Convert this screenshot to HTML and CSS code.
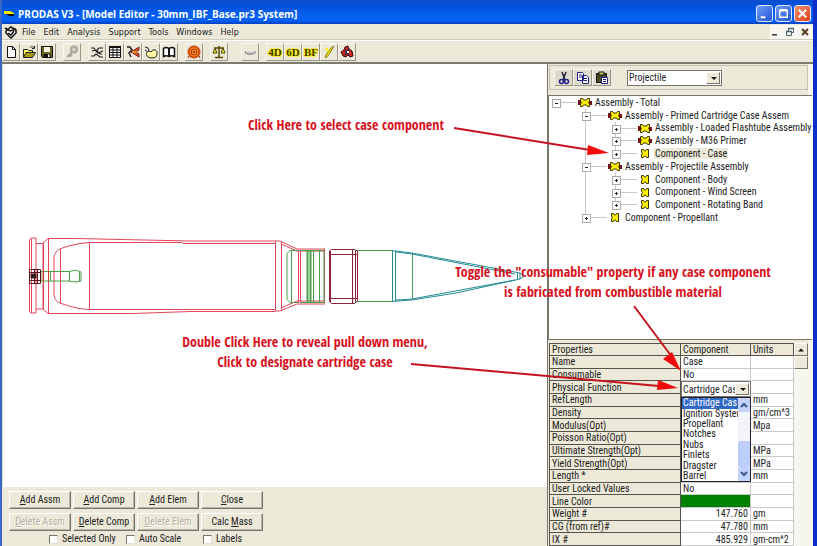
FILE: index.html
```html
<!DOCTYPE html>
<html lang="en">
<head>
<meta charset="utf-8">
<title>PRODAS V3 - [Model Editor - 30mm_IBF_Base.pr3 System]</title>
<link rel="stylesheet" href="styles.css">
</head>
<body>
<svg class="defs" aria-hidden="true">
  <symbol id="assembly" viewBox="0 0 16 11">
    <path d="M1 3h3v5H1z" fill="#7a1010"/><path d="M12 4h3v4h-3z" fill="#7a1010"/>
    <path d="M3.500 1.500h2l1 1.500h3l1-1.500h2v2.500l-1 1.500 1 1.500v2.500h-2L9.500 8h-3l-1 1.500h-2V7l1-1.500-1-1.500z" fill="#ffef00" stroke="#3a3200"/>
  </symbol>
  <symbol id="component" viewBox="0 0 16 11">
    <path d="M4.500 1.500h2l1 1.500h1l1-1.500h2v8h-2L8.500 8h-1l-1 1.500h-2V7l1-1.500-1-1.500z" fill="#ffef00" stroke="#3a3200"/>
  </symbol>
</svg>

<div class="window">
  <header class="titlebar">
    <svg class="app-icon" viewBox="0 0 12 8"><path d="M1 1h6l4 2v1H1z" fill="#f6e600"/><path d="M3 4h8v2H6z" fill="#101010"/></svg>
    <h1>PRODAS V3 - [Model Editor - 30mm_IBF_Base.pr3 System]</h1>
    <div class="window-buttons">
      <button aria-label="Minimize"><svg viewBox="0 0 16 16"><path d="M4 11h5v2H4z" fill="#fff"/></svg></button>
      <button aria-label="Maximize"><svg viewBox="0 0 16 16"><path d="M4 5h8v7H4zM4 4h8" fill="none" stroke="#fff" stroke-width="1.500"/></svg></button>
      <button class="close" aria-label="Close window"><svg viewBox="0 0 16 16"><path d="M4 4l8 8M12 4l-8 8" stroke="#fff" stroke-width="2"/></svg></button>
    </div>
  </header>

  <nav class="menubar">
    <svg class="menu-icon" viewBox="0 0 14 14"><path d="M2 6l5-4 5 3v3l-5 5-5-5z" fill="#fff" stroke="#111" stroke-width="1.500"/><path d="M1 3l5 3 6-2M4 8l3 2 3-4" fill="none" stroke="#111" stroke-width="1.500"/></svg>
    <a href="#">File</a><a href="#">Edit</a><a href="#">Analysis</a><a href="#">Support</a><a href="#">Tools</a><a href="#">Windows</a><a href="#">Help</a>
    <div class="mdi-buttons">
      <button aria-label="Minimize document"><svg viewBox="0 0 10 10"><path d="M2 7h5v1.500H2z" fill="#333"/></svg></button>
      <button aria-label="Restore document"><svg viewBox="0 0 10 10"><path d="M3.500 4V1.500h5v4H7M1.500 4.500h5v4h-5z" fill="none" stroke="#4d6670"/><path d="M3 1.500h6M1 4.500h6" stroke="#4d6670" stroke-width="1.500"/></svg></button>
      <button aria-label="Close document"><svg viewBox="0 0 10 10"><path d="M2 2l6 6M8 2L2 8" stroke="#5a3a20" stroke-width="2"/></svg></button>
    </div>
  </nav>

  <div class="toolbar" role="toolbar">
    <div class="group">
      <button aria-label="New"><svg viewBox="0 0 14 14"><path d="M3.500 1.500h5l3 3v8h-8z" fill="#fff" stroke="#111"/><path d="M8.500 1.500v3h3" fill="none" stroke="#111"/></svg></button>
      <button aria-label="Open"><svg viewBox="0 0 14 14"><path d="M1.500 12V4.500h4l1 1h4V7" fill="#ffef60" stroke="#222"/><path d="M1.500 12.500L4 7.500h9.500l-3 5z" fill="#a59a10" stroke="#222"/><path d="M8 3c1-2 3-2 4 0M12.500 1v2.500H10" fill="none" stroke="#222"/></svg></button>
      <button aria-label="Save"><svg viewBox="0 0 14 14"><path d="M1.500 1.500h11v11h-10l-1-1z" fill="#6d6a20" stroke="#111"/><path d="M4 2h6v5H4z" fill="#f4f2e4"/><path d="M3.500 9h7v3.500h-7z" fill="#111"/><path d="M8 9.500h1.500V12H8z" fill="#fff"/></svg></button>
    </div>
    <div class="group">
      <button aria-label="Find"><svg viewBox="0 0 14 14"><circle cx="9" cy="4.500" r="3" fill="#d5d2c5" stroke="#aaa79b" stroke-width="2"/><path d="M7 7l-5 5M5 12l2-3" stroke="#aaa79b" stroke-width="2"/></svg></button>
    </div>
    <div class="group">
      <button aria-label="Model"><svg viewBox="0 0 14 14"><path d="M1 3l3 0 2 3 3-3h4M2 6l3-1 3 3 5-2M1 11h3l2-2 4 3h3M7 6l3 3 2 0" fill="none" stroke="#222" stroke-width="1.200"/></svg></button>
      <button aria-label="Table"><svg viewBox="0 0 14 14"><path d="M1.500 2.500h11v10h-11zM1.500 5h11M1.500 7.500h11M1.500 10h11M5 2v10.500M9 2v10.500" fill="#fff" stroke="#111"/><path d="M1 2h12" stroke="#111" stroke-width="2"/></svg></button>
      <button aria-label="Launch"><svg viewBox="0 0 14 14"><path d="M1 2h3l2 3-3 3 2 4" fill="none" stroke="#222" stroke-width="1.500"/><path d="M5 7l8-5v3l-3 2 3 2v3z" fill="#e4521b" stroke="#722"/><path d="M6 7h5" stroke="#ffd040"/></svg></button>
      <button aria-label="Shape"><svg viewBox="0 0 14 14"><path d="M1 2l3 1 1 3M1 5l3 2" fill="none" stroke="#222"/><path d="M3 11c-2-4 2-6 4-4 2-4 7-2 6 2 0 3-2 4-5 4-3 0-4-1-5-2z" fill="#fff5a0" stroke="#222"/></svg></button>
      <button aria-label="Library"><svg viewBox="0 0 14 14"><path d="M1.500 3.500c2-2 4-1 5.500 0 1.500-1 3.500-2 5.500 0v8c-2-1-4-1-5.500 0-1.500-1-3.500-1-5.500 0z" fill="#fff" stroke="#111" stroke-width="1.500"/><path d="M7 3v9" stroke="#111" stroke-width="2"/></svg></button>
    </div>
    <div class="group">
      <button aria-label="Target"><svg viewBox="0 0 14 14"><circle cx="7" cy="7" r="5.500" fill="#f39222" stroke="#d04a10" stroke-width="2"/><circle cx="7" cy="7" r="3" fill="none" stroke="#b02a10"/><circle cx="7" cy="7" r="1" fill="#801808"/><path d="M2 11l-1 2M12 11l1 2" stroke="#801808"/></svg></button>
    </div>
    <div class="group">
      <button aria-label="Balance"><svg viewBox="0 0 14 14"><path d="M2 3h10M7 1v11M3 12.500h8" stroke="#554b00" stroke-width="1.500"/><path d="M3 3L1 8h4zM11 3L9 8h4z" fill="#f1e33a" stroke="#554b00"/></svg></button>
    </div>
    <div class="group spaced">
      <button aria-label="Shell"><svg viewBox="0 0 14 14"><path d="M2 7c1 3 9 3 11 0z" fill="#b7b7b7" stroke="#777"/><path d="M3 7h9" stroke="#fff"/></svg></button>
    </div>
    <div class="group dof">
      <button>4D</button>
      <button>6D</button>
      <button>BF</button>
      <button aria-label="Flash"><svg viewBox="0 0 14 14"><path d="M12 1L9 3 6 7l-3 5 1 1 4-5 1-2z" fill="#ffef00" stroke="#6a6200" stroke-width=".8"/><path d="M4 3l2 3" stroke="#ffef00" stroke-width="2"/></svg></button>
      <button aria-label="Fragment"><svg viewBox="0 0 14 14"><path d="M1 7l3-2 1-3 3-1 1 3 3 2 1 5-3 1-2-2-2 2-3-1z" fill="#c52a1c" stroke="#401010"/><path d="M5 5l4 5M9 4l-4 6" stroke="#2c2c60" stroke-width="1.500"/><path d="M7 6h2v2H7z" fill="#fff"/></svg></button>
    </div>
  </div>

  <div class="workspace">
    <main class="editor">
      <div class="canvas">
        <svg class="model" viewBox="3 64 544 423" fill="none" role="img" aria-label="Cartridge cross section">
          <g stroke="#e0455a">
            <path d="M29.500 239.500l2-1.500h4.500v75h-4.500l-2-1.500zM31.500 239v74"/>
            <path d="M36 243.500h7v65.500h-7M43.500 243v66M43 243l5-4.500h28l114 2.500h85M43 309l5 4.500h85l58-2h84M48.500 239v74"/>
            <path d="M90 242.500c-14 1-24 4-30 6.500-4 2-6 6-6 9v36c0 4 2 8 6 9 8 3 18 6 30 6.500M60.500 249v54M89.500 242v67M90 242.500h92l1 1h92M90 309.500h185M275.500 241v70M281.500 242v68"/>
            <path d="M275 241h5l17 8h28M275 311h5l17-7h28M281 244l16 7h28M281 308l16-7h28M298.500 250v53M300.500 250v53M324.500 249v54"/>
          </g>
          <g stroke="#4aa04a">
            <path d="M298 250.500h-8l-3 3v46l3 3h8M291.500 251v51M300 250.500h24v52h-24M313.500 251v51M319.500 251v51"/>
            <path d="M307.500 251v51M310.500 251v51" stroke-width="2"/>
            <path d="M357 250.500h35M357 301.500h35M412.500 253v46"/>
            <path d="M41 271.500h28l7-1.500 5 2v9l-5 1-7-1H41zM50.500 271v10M69.500 271v10M79.500 271v10"/>
          </g>
          <g stroke="#8c2234">
            <path d="M329.500 251l2-1.500h23l3 1.500v50l-3 2.500h-23l-2-2zM330.500 251v51M352.500 250v53M355.500 250v53M330 254.500h27M330 298.500h27"/>
          </g>
          <g stroke="#258b94">
            <path d="M392.500 250v52M395.500 251v50M392 250.500l20 2.500 108 20M396 252l16 2 103 20M392 301.500l20-1.500 44-7 64-14M396 300l16-1 103-19M517.500 273v6M520 273l3 2v2l-3 2z"/>
          </g>
          <g stroke="#5b1620">
            <path d="M29.500 269.500h11v14h-11zM29 272.500h11M29 280.500h11M34.500 270v13M37.500 270v13" />
            <path d="M31 274h5v4h-5z" fill="#222"/><path d="M43.500 271v10M48.500 271v10" stroke="#d03a20"/>
          </g>
        </svg>
      </div>
      <div class="actions">
        <div class="button-grid">
          <button><u>A</u>dd Assm</button><button><u>A</u>dd Comp</button><button><u>A</u>dd Elem</button><button><u>C</u>lose</button>
          <button disabled><u>D</u>elete Assm</button><button><u>D</u>elete Comp</button><button disabled><u>D</u>elete Elem</button><button>Calc <u>M</u>ass</button>
        </div>
        <div class="options">
          <label><input type="checkbox">Selected Only</label>
          <label><input type="checkbox">Auto Scale</label>
          <label><input type="checkbox">Labels</label>
        </div>
      </div>
    </main>

    <aside class="side">
      <div class="edit-tools">
        <div class="clipboard">
          <button aria-label="Cut"><svg viewBox="0 0 14 14"><path d="M5 1l3 8M9 1L6 9" stroke="#223" stroke-width="1.500"/><circle cx="4.500" cy="10.500" r="2" fill="none" stroke="#228" stroke-width="1.500"/><circle cx="9.500" cy="10.500" r="2" fill="none" stroke="#228" stroke-width="1.500"/></svg></button>
          <button aria-label="Copy"><svg viewBox="0 0 14 14"><path d="M1.500 1.500h5l1 1v7h-6zM6.500 4.500h4l2 2v6h-6z" fill="#fff" stroke="#228"/><path d="M3 4h3M3 6h3M8 7.500h3M8 9.500h3" stroke="#228"/></svg></button>
          <button aria-label="Paste"><svg viewBox="0 0 14 14"><path d="M1.500 2.500h10v9h-10z" fill="#4d4a20" stroke="#111"/><path d="M4 1h5v3H4z" fill="#cc6" stroke="#111"/><path d="M6.500 6.500h6v6h-6z" fill="#fff" stroke="#228"/><path d="M8 8.500h3M8 10.500h3" stroke="#228"/></svg></button>
        </div>
        <div class="combo view-combo"><select aria-label="View"><option>Projectile</option></select></div>
      </div>

      <div class="tree-box">
        <ul class="tree" role="tree">
          <li><i class="box minus first"></i><svg><use href="#assembly"/></svg><span>Assembly - Total</span></li>
          <li><i class="guide none"></i><i class="box minus"></i><svg><use href="#assembly"/></svg><span>Assembly - Primed Cartridge Case Assem</span></li>
          <li><i class="guide none"></i><i class="guide"></i><i class="box plus"></i><svg><use href="#assembly"/></svg><span>Assembly - Loaded Flashtube Assembly</span></li>
          <li><i class="guide none"></i><i class="guide"></i><i class="box plus"></i><svg><use href="#assembly"/></svg><span>Assembly - M36 Primer</span></li>
          <li><i class="guide none"></i><i class="guide"></i><i class="box plus last"></i><svg><use href="#component"/></svg><span class="selected">Component - Case</span></li>
          <li><i class="guide none"></i><i class="box minus"></i><svg><use href="#assembly"/></svg><span>Assembly - Projectile Assembly</span></li>
          <li><i class="guide none"></i><i class="guide"></i><i class="box plus"></i><svg><use href="#component"/></svg><span>Component - Body</span></li>
          <li><i class="guide none"></i><i class="guide"></i><i class="box plus"></i><svg><use href="#component"/></svg><span>Component - Wind Screen</span></li>
          <li><i class="guide none"></i><i class="guide"></i><i class="box plus last"></i><svg><use href="#component"/></svg><span>Component - Rotating Band</span></li>
          <li><i class="guide none"></i><i class="box plus last"></i><svg><use href="#component"/></svg><span>Component - Propellant</span></li>
        </ul>
      </div>

      <div class="properties">
        <table>
          <colgroup><col class="name"><col class="value"><col class="unit"></colgroup>
          <thead><tr><th>Properties</th><th>Component</th><th>Units</th></tr></thead>
          <tbody>
            <tr><th>Name</th><td>Case</td><td></td></tr>
            <tr><th>Consumable</th><td>No</td><td></td></tr>
            <tr><th>Physical Function</th><td class="editing">
              <div class="popup">
                <div class="combo"><select aria-label="Physical Function"><option>Cartridge Cas</option></select></div>
                <div class="dropdown">
                  <ul role="listbox" aria-label="Physical Function choices">
                    <li role="option" aria-selected="true">Cartridge Cas</li><li role="option">Ignition Syster</li><li role="option">Propellant</li><li role="option">Notches</li><li role="option">Nubs</li><li role="option">Finlets</li><li role="option">Dragster</li><li role="option">Barrel</li>
                  </ul>
                  <div class="xp-scroll">
                    <svg viewBox="0 0 12 12"><path d="M3 8l3-3 3 3" fill="none" stroke="#3d568c" stroke-width="2"/></svg>
                    <i></i>
                    <svg viewBox="0 0 12 12"><path d="M3 4l3 3 3-3" fill="none" stroke="#3d568c" stroke-width="2"/></svg>
                  </div>
                </div>
              </div></td><td></td></tr>
            <tr><th>RefLength</th><td></td><td>mm</td></tr>
            <tr><th>Density</th><td></td><td>gm/cm^3</td></tr>
            <tr><th>Modulus(Opt)</th><td></td><td>Mpa</td></tr>
            <tr><th>Poisson Ratio(Opt)</th><td></td><td></td></tr>
            <tr><th>Ultimate Strength(Opt)</th><td></td><td>MPa</td></tr>
            <tr><th>Yield Strength(Opt)</th><td></td><td>MPa</td></tr>
            <tr><th>Length *</th><td></td><td>mm</td></tr>
            <tr><th>User Locked Values</th><td>No</td><td></td></tr>
            <tr><th>Line Color</th><td class="swatch"></td><td></td></tr>
            <tr><th>Weight #</th><td class="num">147.760</td><td>gm</td></tr>
            <tr><th>CG (from ref)#</th><td class="num">47.780</td><td>mm</td></tr>
            <tr><th>IX #</th><td class="num">485.929</td><td>gm-cm^2</td></tr>
          </tbody>
        </table>
        <div class="scrollbar"><button aria-label="Scroll up"><svg viewBox="0 0 12 12"><path d="M3 7.500h6L6 4.500z" fill="#111"/></svg></button><i></i></div>
      </div>
    </aside>
  </div>

  <div class="notes">
    <svg viewBox="0 0 817 546" width="817" height="546" aria-hidden="true">
      <g stroke="#c41420" stroke-width="2"><path d="M454 128l136 22M411 364l248 22M634 306l38 51"/></g>
      <g fill="#f00a0a"><path d="M609 153l-21-8-1 10zM678 388l-20-8-1 10zM681 371l-18-12 9-7z"/></g>
    </svg>
    <p class="note select-case">Click Here to select case component</p>
    <p class="note reveal-menu">Double Click Here to reveal pull down menu,<br>Click to designate cartridge case</p>
    <p class="note consumable">Toggle the "consumable" property if any case component<br>is fabricated from combustible material</p>
  </div>
</div>
</body>
</html>
```
FILE: styles.css
```css
* { box-sizing: border-box; }

body {
  margin: 0;
  font: 10px/12px "Roboto Condensed", Roboto, "Liberation Sans", sans-serif;
  color: #222;
}

ul { list-style: none; margin: 0; padding: 0; }
button, select, input { font: inherit; color: inherit; margin: 0; padding: 0; }
button { border: 0; background: none; white-space: nowrap; }
svg { display: block; }
.defs { position: absolute; width: 0; height: 0; }

.window {
  position: relative;
  display: flex;
  flex-direction: column;
  height: 100vh;
  overflow: hidden;
  background: #ece9d8;
  border-left: 2px solid #3c68c4;
  border-right: 4px solid #0b2fc8;
}

/* Title bar */
.titlebar {
  display: flex;
  align-items: center;
  flex: none;
  height: 24px;
  margin: 0 -4px 0 -2px;
  padding: 3px 6px 0 3px;
  background: linear-gradient(#0a4fd0, #0450dc 25%, #0560f0 60%, #0660f6 85%, #0440c0);
}
.app-icon { width: 12px; height: 8px; margin-right: 3px; }
.titlebar h1 {
  flex: 1;
  margin: 0;
  font: bold 10px/14px "Open Sans", sans-serif;
  color: #fff;
}
.window-buttons { display: flex; gap: 2px; }
.window-buttons button {
  width: 17px;
  height: 17px;
  border: 1px solid #dfe8fb;
  border-radius: 3px;
  background: linear-gradient(135deg, #6f9bf5, #2456d8);
}
.window-buttons .close { background: linear-gradient(135deg, #f09070, #d8401c); }

/* Menu bar */
.menubar {
  display: flex;
  align-items: center;
  flex: none;
  height: 16px;
  border-bottom: 1px solid #cfccbc;
  font: 9px/14px "DejaVu Sans Condensed", "DejaVu Sans", sans-serif;
}
.menubar a { color: #222; text-decoration: none; margin-right: 8px; }
.menu-icon { width: 14px; height: 14px; margin: 0 4px 0 2px; }
.mdi-buttons { display: flex; gap: 4px; margin-left: auto; padding-right: 2px; background: #f8f7f2; }
.mdi-buttons button { width: 11px; height: 14px; }
.mdi-buttons svg { width: 10px; height: 10px; }

/* Toolbar */
.toolbar {
  display: flex;
  align-items: center;
  gap: 7px;
  flex: none;
  height: 24px;
  border-top: 1px solid #fff;
  border-bottom: 2px solid #7d7b70;
}
.group { display: flex; }
.group.spaced { margin-left: 6px; }
.group button {
  display: grid;
  place-items: center;
  width: 18px;
  height: 18px;
  border: 1px solid #f8f7f0;
  border-right-color: #9a978a;
  border-bottom-color: #9a978a;
}
.group svg { width: 14px; height: 14px; }
.dof button {
  font: bold 11px/14px "Liberation Serif", serif;
  color: #3c3800;
  text-shadow: 1px 1px #ffef00, -1px 0 #ffef00, 0 -1px #ffef00, 1px 0 #ffef00;
}

/* Workspace */
.workspace { display: flex; flex: 1; min-height: 0; }
.editor { display: flex; flex-direction: column; flex: 1; min-width: 0; }
.canvas { flex: 1; min-height: 0; background: #fff; border-left: 1px solid #dcdccc; overflow: hidden; }
.model { width: 544px; height: 423px; }
.actions { flex: none; height: 59px; padding: 4px 7px 0; }
.button-grid { display: grid; grid-template-columns: repeat(4, 62px); gap: 4px 2px; }
.button-grid button {
  height: 18px;
  border: 1px solid #fff;
  border-right-color: #77746a;
  border-bottom-color: #77746a;
  box-shadow: inset -1px -1px #bab7a8;
}
.button-grid button:disabled { color: #b3b0a2; text-shadow: 1px 1px #fff; }
.options { display: flex; padding: 2px 0 0 40px; }
.options label { display: flex; align-items: center; gap: 4px; width: 77px; white-space: nowrap; }
.options input {
  appearance: none;
  width: 9px;
  height: 9px;
  background: #fff;
  border: 1px solid #e4e1d4;
  border-top-color: #77746a;
  border-left-color: #77746a;
}

/* Side panel */
.side {
  display: flex;
  flex-direction: column;
  flex: none;
  width: 266px;
  border-left: 1px solid #77746a;
  border-right: 5px solid #f8f5f2;
}
.edit-tools {
  display: flex;
  align-items: center;
  gap: 16px;
  height: 25px;
  margin: 1px 0 5px 1px;
  padding: 0 5px 0 4px;
  border: 1px solid #c5c2b2;
}
.clipboard { display: flex; }
.clipboard button {
  display: grid;
  place-items: center;
  width: 19px;
  height: 17px;
  background: #dedbcd;
  border: 1px solid #f8f7f0;
  border-right-color: #9a978a;
  border-bottom-color: #9a978a;
}
.clipboard svg { width: 14px; height: 14px; }

.combo { position: relative; height: 16px; background: #fff; border: 1px solid #77746a; }
.combo select {
  display: block;
  appearance: none;
  width: 100%;
  height: 100%;
  padding: 0 0 0 1px;
  border: 0;
  background: none;
}
.combo::before {
  content: "";
  position: absolute;
  inset: 1px 1px 1px auto;
  width: 12px;
  background: #ece9d8;
  border: 1px solid #fff;
  border-right-color: #77746a;
  border-bottom-color: #77746a;
  pointer-events: none;
}
.combo::after {
  content: "";
  position: absolute;
  right: 4px;
  top: 6px;
  border: 3px solid transparent;
  border-top-color: #111;
  border-bottom: 0;
  pointer-events: none;
}
.view-combo { width: 95px; }

/* Component tree */
.tree-box {
  flex: 1;
  min-height: 0;
  margin-right: -4px;
  background: #fff;
  border: 1px solid #77746a;
  border-width: 1px 0 1px 1px;
}
.tree { display: grid; grid-auto-rows: 1fr; height: 128px; padding-left: 2px; }
.tree li { display: flex; align-items: stretch; white-space: nowrap; }
.tree svg { width: 16px; height: 11px; margin: 1px 1px 0 0; }
.tree span { align-self: center; padding: 0 1px; line-height: 11px; }
.tree .selected { background: #ece9d8; }
.guide { width: 30px; background: linear-gradient(#c8c8c8, #c8c8c8) 4px 0 / 1px 100% no-repeat; }
.guide.none { background: none; }
.box {
  position: relative;
  width: 26px;
  background:
    linear-gradient(#c8c8c8, #c8c8c8) 4px 0 / 1px 100% no-repeat,
    linear-gradient(#c8c8c8, #c8c8c8) 9px 6px / 17px 1px no-repeat;
}
.box.last { background-size: 1px 50%, 17px 1px; }
.box.first { background-size: 0 0, 17px 1px; }
.box::before {
  content: "";
  position: absolute;
  left: 1px;
  top: 3px;
  width: 7px;
  height: 7px;
  border: 1px solid #aaa;
  background: linear-gradient(#222, #222) center / 3px 1px no-repeat, #fff;
}
.box.plus::before {
  background:
    linear-gradient(#222, #222) center / 3px 1px no-repeat,
    linear-gradient(#222, #222) center / 1px 3px no-repeat,
    #fff;
}

/* Property table */
.properties { display: flex; flex: none; height: 206px; padding: 3px 0 0 1px; }
.properties table {
  flex: 1;
  width: 100%;
  min-width: 0;
  height: 100%;
  table-layout: fixed;
  border-collapse: separate;
  border-spacing: 0;
  background: #fff;
  border-top: 1px solid #555;
  border-left: 1px solid #555;
}
.name { width: 131px; }
.value { width: 70px; }
.properties th, .properties td {
  height: 12px;
  padding: 0 2px;
  line-height: 11px;
  font-weight: normal;
  text-align: left;
  white-space: nowrap;
  border-right: 1px solid #c9c9c9;
  border-bottom: 1px solid #c9c9c9;
}
.properties th { background: #ece9d8; border-color: #55534c; }
.properties .num { text-align: right; }
.properties .swatch { background: #008000; }
.editing { position: relative; }
.popup { position: absolute; z-index: 1; left: 0; top: 0; width: 70px; }
.dropdown { display: flex; height: 85px; background: #fff; border: 1px solid #223; }
.dropdown ul { display: grid; grid-auto-rows: 1fr; flex: 1; min-width: 0; }
.dropdown li { padding-left: 1px; line-height: 10px; }
.dropdown li[aria-selected] { background: #316ac5; color: #fff; }
.xp-scroll { display: flex; flex-direction: column; justify-content: space-between; width: 12px; background: #f3f3fa; }
.xp-scroll svg { height: 14px; width: 12px; background: #c3d3fd; border-radius: 2px; }
.xp-scroll i { height: 26px; margin-top: auto; background: #bccffc; border-radius: 2px; }
.scrollbar { flex: none; width: 14px; background: #f6f5ee; }
.scrollbar button, .scrollbar i {
  display: block;
  width: 14px;
  height: 13px;
  background: #ece9d8;
  border: 1px solid #fff;
  border-right-color: #77746a;
  border-bottom-color: #77746a;
}

/* Callouts drawn over the window */
.notes { position: absolute; z-index: 2; top: 0; left: -2px; pointer-events: none; }
.note {
  position: absolute;
  margin: 0;
  font: bold 14px/20px "Open Sans Condensed", "Roboto Condensed", sans-serif;
  color: #d8101c;
  text-align: center;
  white-space: nowrap;
  transform: translateX(-50%);
}
.select-case { left: 346px; top: 115px; }
.reveal-menu { left: 305px; top: 332px; }
.consumable { left: 613px; top: 262px; }
```
